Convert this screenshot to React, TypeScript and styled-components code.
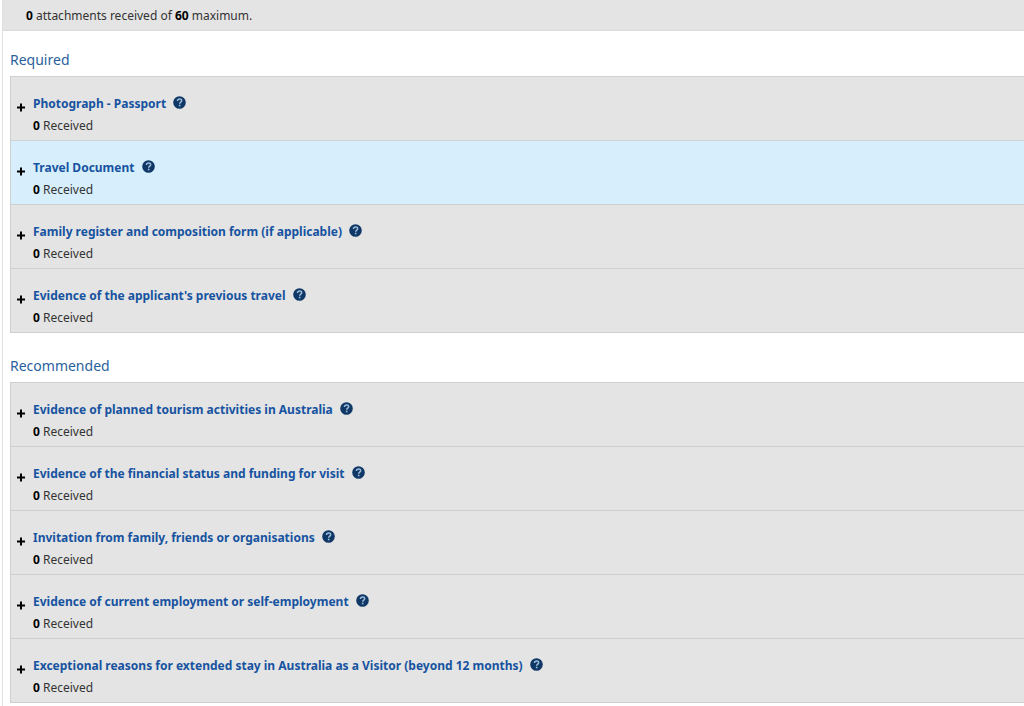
import React from "react";
import styled, { createGlobalStyle } from "styled-components";

const GlobalStyle = createGlobalStyle`
  * { box-sizing: border-box; }
  body {
    margin: 0;
    background: #ffffff;
    color: #333333;
    font-family: "Noto Sans", "Open Sans", sans-serif;
    font-size: 12px;
    line-height: 22px;
  }
`;

const Page = styled.main`
  margin-left: 2px;
  border-left: 1px solid #dcdfe3;
  min-height: 100vh;
`;

const Summary = styled.p`
  margin: 0;
  padding: 5px 23px 3px;
  background: #e4e4e4;
  border-bottom: 1px solid #dadada;
`;

const Count = styled.strong`
  color: #000000;
  font-weight: 700;
`;

const Section = styled.section`
  padding: 18px 0 4px 7px;
`;

const Heading = styled.h2`
  margin: 0 0 5px;
  color: #2a5f9e;
  font-size: 14px;
  font-weight: 400;
  line-height: 22px;
`;

const List = styled.ul`
  margin: 0;
  padding: 0;
  list-style: none;
  border-left: 1px solid #cfcfcf;
  border-bottom: 1px solid #cfcfcf;
`;

const Item = styled.li<{ $active?: boolean }>`
  display: flex;
  align-items: flex-start;
  gap: 8px;
  padding: 16px 0 3px 6px;
  border-top: 1px solid #cfd0d2;
  background: ${(p) => (p.$active ? "#d7effc" : "#e4e4e4")};
`;

const PlainButton = styled.button`
  display: flex;
  padding: 0;
  border: 0;
  background: none;
  color: inherit;
  cursor: pointer;
`;

const ExpandButton = styled(PlainButton)`
  padding-top: 10px;
`;

const TitleLine = styled.div`
  display: flex;
  align-items: center;
  gap: 7px;
`;

const TitleLink = styled.a`
  color: #1653a0;
  font-weight: 700;
  text-decoration: none;
`;

const HelpButton = styled(PlainButton)`
  padding-bottom: 3px;
`;

const Received = styled.div`
  color: #333333;
`;

const PlusIcon = () => (
  <svg width="8" height="9" viewBox="0 0 8 9" aria-hidden="true">
    <path d="M4 0.5v8M0 4.5h8" stroke="#000000" strokeWidth="2" fill="none" />
  </svg>
);

const HelpIcon = () => (
  <svg width="13" height="13" viewBox="0 0 12 12" aria-hidden="true">
    <circle cx="6" cy="6" r="5.8" fill="#0f3866" />
    <path
      d="M4.1 4.6C4.2 3.3 5 2.8 6.1 2.8C7.2 2.8 8 3.4 8 4.4C8 5.7 6.2 5.7 6.2 7.2"
      fill="none"
      stroke="#9dbbd8"
      strokeWidth="1.4"
    />
    <rect x="5.4" y="8" width="1.5" height="1.5" fill="#9dbbd8" />
  </svg>
);

type Group = { name: string; items: { title: string; active?: boolean }[] };

const groups: Group[] = [
  {
    name: "Required",
    items: [
      { title: "Photograph - Passport" },
      { title: "Travel Document", active: true },
      { title: "Family register and composition form (if applicable)" },
      { title: "Evidence of the applicant's previous travel" },
    ],
  },
  {
    name: "Recommended",
    items: [
      { title: "Evidence of planned tourism activities in Australia" },
      { title: "Evidence of the financial status and funding for visit" },
      { title: "Invitation from family, friends or organisations" },
      { title: "Evidence of current employment or self-employment" },
      { title: "Exceptional reasons for extended stay in Australia as a Visitor (beyond 12 months)" },
    ],
  },
];

export default function App() {
  return (
    <>
      <GlobalStyle />
      <Page>
        <Summary>
          <Count>0</Count> attachments received of <Count>60</Count> maximum.
        </Summary>
        {groups.map((group) => (
          <Section key={group.name}>
            <Heading>{group.name}</Heading>
            <List>
              {group.items.map((item) => (
                <Item key={item.title} $active={item.active}>
                  <ExpandButton type="button" aria-label={`Expand ${item.title}`}>
                    <PlusIcon />
                  </ExpandButton>
                  <div>
                    <TitleLine>
                      <TitleLink href="#">{item.title}</TitleLink>
                      <HelpButton type="button" aria-label={`Help for ${item.title}`}>
                        <HelpIcon />
                      </HelpButton>
                    </TitleLine>
                    <Received>
                      <Count>0</Count> Received
                    </Received>
                  </div>
                </Item>
              ))}
            </List>
          </Section>
        ))}
      </Page>
    </>
  );
}
